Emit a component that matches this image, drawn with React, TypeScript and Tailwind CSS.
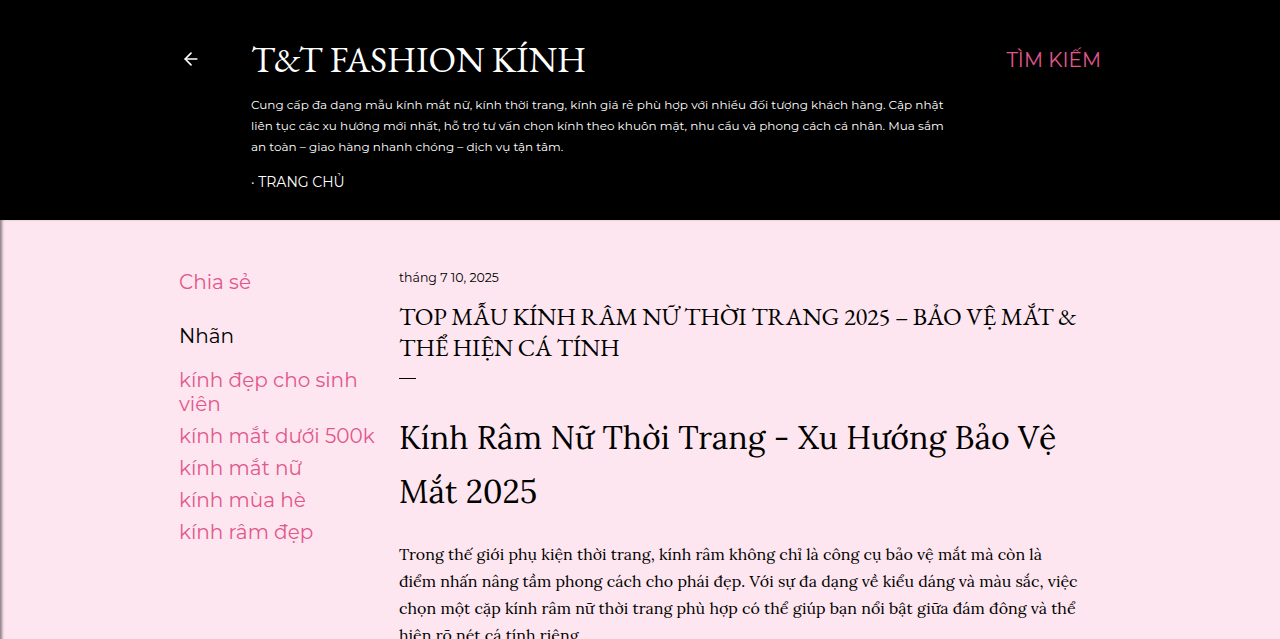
import { ArrowLeft } from "lucide-react"

const sans = "font-['Montserrat','Open_Sans','DejaVu_Sans',sans-serif]"
const garamond = "font-['EB_Garamond','Liberation_Serif',serif]"
const lora = "font-['Lora','Liberation_Serif',serif]"

const labels = ["kính đẹp cho sinh viên", "kính mắt dưới 500k", "kính mắt nữ", "kính mùa hè", "kính râm đẹp"]

export default function App() {
  return (
    <div className={`min-h-[639px] bg-[#fde6ef] ${sans}`}>
      <header className="bg-black text-white">
        <div className="mx-auto flex h-[220px] w-[922px] items-start pt-[38px]">
          <button type="button" className="mt-[11px] ml-[2px] w-[70px] text-white">
            <ArrowLeft size={20} strokeWidth={2} />
          </button>
          <div className="flex-1">
            <h1 className={`${garamond} text-[36px] leading-[44px]`}>T&amp;T FASHION KÍNH</h1>
            <p className="mt-[12px] text-[12px] leading-[21px] whitespace-nowrap">
              Cung cấp đa dạng mẫu kính mắt nữ, kính thời trang, kính giá rẻ phù hợp với nhiều đối tượng khách hàng. Cập nhật
              <br />
              liên tục các xu hướng mới nhất, hỗ trợ tư vấn chọn kính theo khuôn mặt, nhu cầu và phong cách cá nhân. Mua sắm
              <br />
              an toàn – giao hàng nhanh chóng – dịch vụ tận tâm.
            </p>
            <div className="mt-[15px] text-[14px] leading-[20px] uppercase">· Trang chủ</div>
          </div>
          <div className="mt-[8px] text-[20px] leading-[28px] text-[#e2578b] uppercase">Tìm kiếm</div>
        </div>
      </header>

      <main className="shadow-[inset_3px_0_3px_-1px_rgba(0,0,0,0.45)]">
        <div className="mx-auto flex w-[922px] pt-[49px]">
          <aside className="-mt-px w-[220px] shrink-0">
            <div className="text-[20px] leading-[28px] text-[#e2578b]">Chia sẻ</div>
            <div className="mt-[26px] text-[20px] leading-[28px] text-black">Nhãn</div>
            <ul className="mt-[18px] flex w-[200px] flex-col gap-[8px]">
              {labels.map((l) => (
                <li key={l} className="text-[20px] leading-[24px] text-[#e2578b]">
                  {l}
                </li>
              ))}
            </ul>
          </aside>
          <article className="w-[682px] text-black">
            <div className="text-[12.5px] leading-[18px]">tháng 7 10, 2025</div>
            <h2 className={`${garamond} mt-[14px] text-[24.5px] leading-[31px] tracking-[-0.2px] whitespace-nowrap uppercase`}>
              Top mẫu kính râm nữ thời trang 2025 – bảo vệ mắt &amp;
              <br />
              thể hiện cá tính
            </h2>
            <div className="mt-[15px] h-px w-[17px] bg-black" />
            <h3 className={`${lora} mt-[32px] text-[32px] leading-[54px] whitespace-nowrap`}>
              Kính Râm Nữ Thời Trang - Xu Hướng Bảo Vệ
              <br />
              Mắt 2025
            </h3>
            <p className={`${lora} mt-[22px] text-[16px] leading-[27px] whitespace-nowrap`}>
              Trong thế giới phụ kiện thời trang, kính râm không chỉ là công cụ bảo vệ mắt mà còn là
              <br />
              điểm nhấn nâng tầm phong cách cho phái đẹp. Với sự đa dạng về kiểu dáng và màu sắc, việc
              <br />
              chọn một cặp kính râm nữ thời trang phù hợp có thể giúp bạn nổi bật giữa đám đông và thể
              <br />
              hiện rõ nét cá tính riêng.
            </p>
          </article>
        </div>
      </main>
    </div>
  )
}
